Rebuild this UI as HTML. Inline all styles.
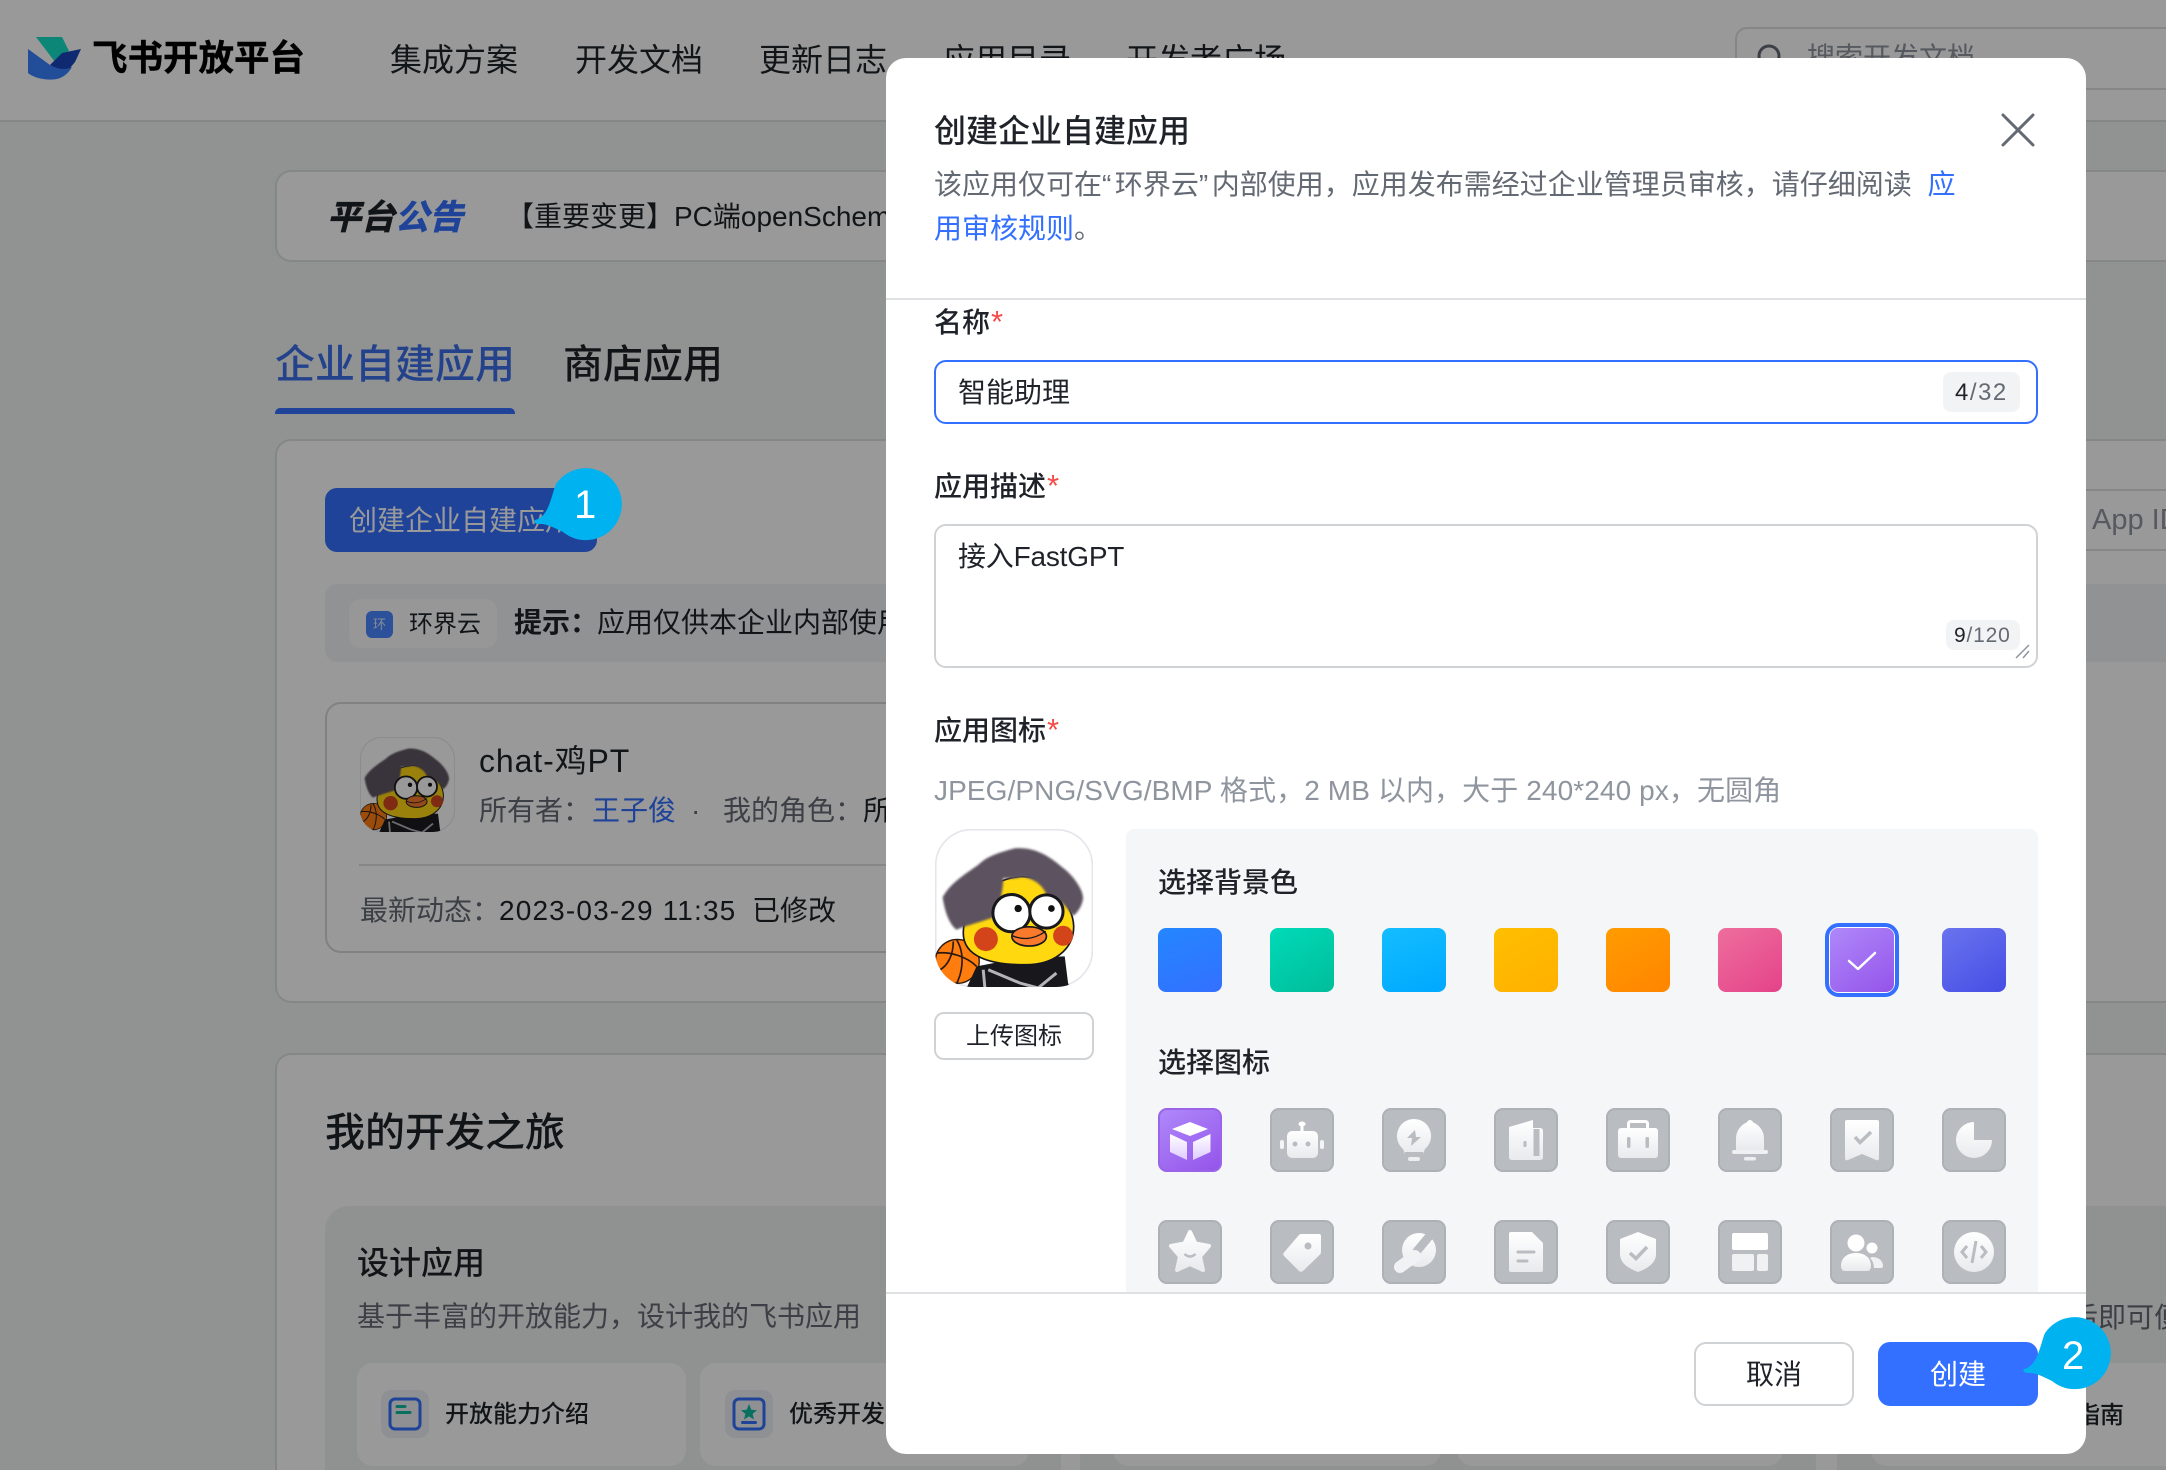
<!DOCTYPE html>
<html lang="zh-CN">
<head>
<meta charset="utf-8">
<title>飞书开放平台</title>
<style>
html,body{margin:0;padding:0;width:2166px;height:1470px;overflow:hidden;background:#f2f5f4}
body{position:relative;font-family:"Liberation Sans","Noto Sans CJK SC",sans-serif;color:#1f2329}
#clip{position:absolute;left:0;top:0;width:2166px;height:1470px;overflow:hidden}
.t{position:absolute;white-space:nowrap;line-height:1}
.b{position:absolute;box-sizing:border-box}
.m{font-weight:500}
.r{color:#f54a45;font-size:31px;margin-left:1px;line-height:1}
.sw{position:absolute;top:928px;width:64px;height:64px;border-radius:8px}
.ic{position:absolute;width:64px;height:64px;border-radius:9px;background:#b9bcc1;box-sizing:border-box;border:2px solid #adb1b5}
.ic svg{position:absolute;left:-2px;top:-2px;width:64px;height:64px}
</style>
</head>
<body>
<svg width="0" height="0" style="position:absolute">
<defs>
<linearGradient id="g" x1="0" y1="0" x2="0" y2="1"><stop offset="0" stop-color="#ffffff"/><stop offset="1" stop-color="#e8eaed"/></linearGradient>
<linearGradient id="gp" x1="0" y1="0" x2="0" y2="1"><stop offset="0" stop-color="#ffffff"/><stop offset="1" stop-color="#dfcbff"/></linearGradient>
<clipPath id="dc"><rect x="45" y="57" width="475" height="475" rx="110"/></clipPath>
<filter id="hb" x="-10%" y="-10%" width="120%" height="120%"><feGaussianBlur stdDeviation="3.500"/></filter>
<symbol id="duck" viewBox="45 57 475 475">
<rect x="47" y="59" width="471" height="471" rx="108" fill="#fff" stroke="#e5e6eb" stroke-width="5"/>
<g clip-path="url(#dc)">
<circle cx="112" cy="455" r="66" fill="#ff7d0f" stroke="#2a1a10" stroke-width="4"/>
<path d="M50 430C90 425 140 440 170 470M110 390C135 430 130 490 105 530M60 480C80 470 100 440 100 395" fill="none" stroke="#2a1a10" stroke-width="5"/>
<path d="M140 535L170 470L300 445L435 440L445 520L450 535Z" fill="#17171c"/>
<path d="M205 480L300 520L355 535M410 490L355 535M190 480L195 535" fill="none" stroke="#b4b4ba" stroke-width="9"/>
<path d="M130 370C130 290 200 210 300 200C390 195 460 280 462 350C462 420 400 468 310 465C210 465 130 440 130 370Z" fill="#ffd80f" stroke="#17171c" stroke-width="5"/>
<path filter="url(#hb)" d="M68 262C90 220 140 190 175 165C205 135 250 125 285 115C340 110 385 135 425 170C460 195 492 240 490 268C485 295 470 312 460 318C440 290 420 265 380 255C370 225 340 205 305 200C290 208 265 205 250 205C250 250 235 300 215 325C170 340 130 350 110 360C90 345 75 310 68 262Z" fill="#5d5361"/>
<circle cx="275" cy="310" r="56" fill="#fff" stroke="#17171c" stroke-width="9"/>
<circle cx="380" cy="305" r="50" fill="#fff" stroke="#17171c" stroke-width="9"/>
<circle cx="295" cy="296" r="11" fill="#111"/>
<circle cx="395" cy="296" r="10" fill="#111"/>
<circle cx="198" cy="388" r="36" fill="#d4441a"/>
<circle cx="430" cy="378" r="30" fill="#d4441a"/>
<ellipse cx="328" cy="380" rx="52" ry="29" fill="#f97a2c" stroke="#17171c" stroke-width="5"/>
<path d="M278 378C310 392 345 388 378 364" fill="none" stroke="#17171c" stroke-width="4"/>
</g>
</symbol>
</defs>
</svg>

<div id="clip">
<!-- ===== page behind the modal ===== -->
<div class="b" style="left:0;top:0;width:2166px;height:122px;background:#fff;border-bottom:2px solid #dee0e3"></div>
<svg class="b" style="left:0;top:0" width="120" height="100" viewBox="0 0 120 100">
<path d="M36 37H62L69 51L55 62Z" fill="#15e0c5"/>
<path d="M28 49L50 65C58 69 64 69 72 67C68 74 62 79 53 79.500C44 80 34 78 28 73Z" fill="#3a80ff"/>
<path d="M50 65L62 53L81 49L75 62L70 68C64 70 57 69 50 65Z" fill="#1a46bb"/>
</svg>
<div class="t" style="left:92px;top:41px;font-size:35.500px;font-weight:700;color:#000;-webkit-text-stroke:.4px #000">飞书开放平台</div>
<div class="t" style="left:390px;top:44px;font-size:32px">集成方案</div>
<div class="t" style="left:575px;top:44px;font-size:32px">开发文档</div>
<div class="t" style="left:759px;top:44px;font-size:32px">更新日志</div>
<div class="t" style="left:943px;top:44px;font-size:32px">应用目录</div>
<div class="t" style="left:1126px;top:44px;font-size:32px">开发者广场</div>
<div class="b" style="left:1735px;top:27px;width:431px;height:63px;border:2px solid #dee0e3;border-right:0;border-radius:12px 0 0 12px;background:#fff"></div>
<svg class="b" style="left:1755px;top:42px" width="34" height="34" viewBox="0 0 34 34"><circle cx="14" cy="14" r="10" fill="none" stroke="#646a73" stroke-width="3"/><path d="M22 22L29 29" stroke="#646a73" stroke-width="3"/></svg>
<div class="t" style="left:1807px;top:44px;font-size:28px;color:#8f959e">搜索开发文档</div>

<div class="b" style="left:275px;top:170px;width:1891px;height:92px;background:#fff;border:2px solid #dee0e3;border-right:0;border-radius:16px 0 0 16px"></div>
<div class="t" style="left:327px;top:201px;font-size:34px;font-weight:700;font-style:italic;color:#1f2329;-webkit-text-stroke:.7px #1f2329">平台<span style="color:#3370ff;-webkit-text-stroke:.7px #3370ff">公告</span></div>
<div class="t" style="left:506px;top:203px;font-size:28px">【重要变更】PC端openSchema</div>

<div class="t m" style="left:275px;top:345px;font-size:40px;color:#3d6fe8">企业自建应用</div>
<div class="t m" style="left:563px;top:345px;font-size:40px">商店应用</div>
<div class="b" style="left:275px;top:408px;width:240px;height:6px;background:#3370ff;border-radius:5px 5px 0 0"></div>

<!-- main card -->
<div class="b" style="left:275px;top:439px;width:1891px;height:564px;background:#fff;border:2px solid #dee0e3;border-right:0;border-radius:16px 0 0 16px"></div>
<div class="b" style="left:325px;top:488px;width:272px;height:64px;background:#3370ff;border-radius:12px"></div>
<div class="t" style="left:349px;top:507px;font-size:28px;color:#fff">创建企业自建应用</div>
<div class="b" style="left:2040px;top:489px;width:126px;height:62px;border:2px solid #dee0e3;border-right:0;border-radius:12px 0 0 12px;background:#fff"></div>
<div class="t" style="left:2092px;top:506px;font-size:29px;color:#8f959e">App ID</div>
<div class="b" style="left:325px;top:584px;width:1841px;height:78px;background:#f2f4f5;border-radius:12px 0 0 12px"></div>
<div class="b" style="left:349px;top:599px;width:148px;height:49px;background:#fff;opacity:.75;border-radius:12px"></div>
<div class="b" style="left:366px;top:611px;width:27px;height:27px;background:#4a86ff;border-radius:6px"></div>
<div class="t" style="left:373px;top:618px;font-size:13px;color:#dfe8ff">环</div>
<div class="t" style="left:409px;top:613px;font-size:24px">环界云</div>
<div class="t" style="left:514px;top:609px;font-size:28px;font-weight:700">提示：</div>
<div class="t" style="left:597px;top:609px;font-size:28px">应用仅供本企业内部使用</div>

<div class="b" style="left:325px;top:702px;width:1300px;height:251px;border:2px solid #d5d7da;border-radius:16px"></div>
<svg class="b" style="left:360px;top:737px;opacity:.98" width="95" height="95"><use href="#duck" width="95" height="95"/></svg>
<div class="t" style="left:479px;top:745px;font-size:32px;letter-spacing:.9px">chat-鸡PT</div>
<div class="t" style="left:479px;top:797px;font-size:28px;color:#646a73">所有者：</div>
<div class="t" style="left:592px;top:797px;font-size:28px;color:#3370ff">王子俊</div>
<div class="t" style="left:691px;top:797px;font-size:28px;color:#646a73">·</div>
<div class="t" style="left:723px;top:797px;font-size:28px;color:#646a73">我的角色：</div>
<div class="t" style="left:863px;top:797px;font-size:28px">所有者</div>
<div class="b" style="left:359px;top:864px;width:1200px;height:2px;background:#dee0e3"></div>
<div class="t" style="left:360px;top:897px;font-size:28px;color:#646a73">最新动态：</div>
<div class="t" style="left:499px;top:897px;font-size:28px;letter-spacing:1.150px">2023-03-29 11:35</div>
<div class="t" style="left:752px;top:897px;font-size:28px">已修改</div>

<!-- second card -->
<div class="b" style="left:275px;top:1053px;width:1891px;height:417px;background:#fff;border:2px solid #dee0e3;border-right:0;border-bottom:0;border-radius:16px 0 0 0"></div>
<div class="t m" style="left:325px;top:1113px;font-size:40px">我的开发之旅</div>
<div class="b" style="left:325px;top:1206px;width:736px;height:264px;background:#f0f3f3;border-radius:24px 24px 0 0"></div>
<div class="b" style="left:1080px;top:1206px;width:736px;height:264px;background:#f0f3f3;border-radius:24px 24px 0 0"></div>
<div class="b" style="left:1837px;top:1206px;width:329px;height:264px;background:#f0f3f3;border-radius:24px 0 0 0"></div>
<div class="t m" style="left:357px;top:1247px;font-size:32px">设计应用</div>
<div class="t" style="left:357px;top:1303px;font-size:28px;color:#646a73">基于丰富的开放能力，设计我的飞书应用</div>
<div class="b" style="left:357px;top:1363px;width:329px;height:103px;background:#fff;border-radius:16px"></div>
<div class="b" style="left:700px;top:1363px;width:329px;height:103px;background:#fff;border-radius:16px"></div>
<div class="b" style="left:1113px;top:1363px;width:328px;height:103px;background:#fff;border-radius:16px"></div>
<div class="b" style="left:1457px;top:1363px;width:326px;height:103px;background:#fff;border-radius:16px"></div>
<div class="b" style="left:1871px;top:1363px;width:295px;height:103px;background:#fff;border-radius:16px 0 0 16px"></div>
<svg class="b" style="left:381px;top:1390px" width="48" height="48" viewBox="0 0 48 48"><rect width="48" height="48" rx="10" fill="#edf1f5"/><rect x="9" y="9" width="30" height="30" rx="5" fill="none" stroke="#3370ff" stroke-width="3"/><path d="M16 16.500H24M16 22.500H29" stroke="#10b9a0" stroke-width="3" stroke-linecap="round"/></svg>
<div class="t m" style="left:445px;top:1403px;font-size:24px">开放能力介绍</div>
<svg class="b" style="left:725px;top:1390px" width="48" height="48" viewBox="0 0 48 48"><rect width="48" height="48" rx="10" fill="#edf1f5"/><rect x="9" y="9" width="30" height="30" rx="5" fill="none" stroke="#3370ff" stroke-width="3"/><path d="M24 14L26.300 19.800L32 20.200L27.600 23.900L29 29.500L24 26.400L19 29.500L20.400 23.900L16 20.200L21.700 19.800Z" fill="#10b9a0"/><path d="M17.500 32.500H30.500" stroke="#3370ff" stroke-width="3" stroke-linecap="round"/></svg>
<div class="t m" style="left:789px;top:1403px;font-size:24px">优秀开发者案例</div>
<div class="t" style="left:2070px;top:1304px;font-size:28px;color:#646a73">后即可便</div>
<div class="t m" style="left:2076px;top:1404px;font-size:24px">指南</div>
</div>

<!-- overlay -->
<div class="b" style="left:0;top:0;width:2166px;height:1470px;background:rgba(0,0,0,.4)"></div>

<!-- ===== modal ===== -->
<div class="b" style="left:886px;top:58px;width:1200px;height:1396px;background:#fff;border-radius:20px"></div>
<div class="t m" style="left:934px;top:115px;font-size:32px">创建企业自建应用</div>
<svg class="b" style="left:2000px;top:112px" width="36" height="36" viewBox="0 0 36 36"><path d="M3 3L33 33M33 3L3 33" stroke="#646a73" stroke-width="3" stroke-linecap="round"/></svg>
<div class="t" style="left:934px;top:163px;font-size:28px;line-height:44px;color:#646a73;white-space:nowrap">该应用仅可在<span style="letter-spacing:3.500px">“</span>环界云<span style="letter-spacing:3.500px">”</span>内部使用，应用发布需经过企业管理员审核，请仔细阅读 <span style="color:#3370ff;margin-left:8px">应<br>用审核规则</span>。</div>
<div class="b" style="left:886px;top:298px;width:1200px;height:2px;background:#dee0e3"></div>

<div class="t m" style="left:934px;top:306px;font-size:28px">名称<span class="r">*</span></div>
<div class="b" style="left:934px;top:360px;width:1104px;height:64px;border:2px solid #3370ff;border-radius:12px"></div>
<div class="t" style="left:958px;top:379px;font-size:28px">智能助理</div>
<div class="b" style="left:1943px;top:372px;width:77px;height:40px;background:#f2f3f5;border-radius:8px"></div>
<div class="t" style="left:1955px;top:381px;font-size:24px;letter-spacing:1.500px;color:#646a73"><span style="color:#1f2329">4</span>/32</div>

<div class="t m" style="left:934px;top:470px;font-size:28px">应用描述<span class="r">*</span></div>
<div class="b" style="left:934px;top:524px;width:1104px;height:144px;border:2px solid #d0d3d6;border-radius:12px"></div>
<div class="t" style="left:958px;top:543px;font-size:28px;letter-spacing:-.2px">接入FastGPT</div>
<div class="b" style="left:1946px;top:620px;width:74px;height:30px;background:#f2f3f5;border-radius:8px"></div>
<div class="t" style="left:1954px;top:625px;font-size:21px;letter-spacing:.8px;color:#646a73"><span style="color:#1f2329">9</span>/120</div>
<svg class="b" style="left:2014px;top:642px" width="18" height="18" viewBox="0 0 18 18"><path d="M2 16L15 3M9 16L15 9" stroke="#8f959e" stroke-width="1.500"/></svg>

<div class="t m" style="left:934px;top:714px;font-size:28px">应用图标<span class="r">*</span></div>
<div class="t" style="left:934px;top:777px;font-size:28px;letter-spacing:.1px;color:#8f959e">JPEG/PNG/SVG/BMP 格式，2 MB 以内，大于 240*240 px，无圆角</div>

<svg class="b" style="left:935px;top:829px" width="158" height="158"><use href="#duck" width="158" height="158"/></svg>
<div class="b" style="left:934px;top:1012px;width:160px;height:48px;border:2px solid #d0d3d6;border-radius:10px"></div>
<div class="t" style="left:966px;top:1025px;font-size:24px">上传图标</div>

<div class="b" style="left:1126px;top:829px;width:912px;height:464px;background:#f5f6f8;border-radius:8px 8px 0 0"></div>
<div class="t m" style="left:1158px;top:869px;font-size:28px">选择背景色</div>
<div class="sw" style="left:1158px;background:linear-gradient(160deg,#2486ff,#3370ff)"></div>
<div class="sw" style="left:1270px;background:linear-gradient(150deg,#00dab8,#00bd9a)"></div>
<div class="sw" style="left:1382px;background:linear-gradient(160deg,#14bdff,#00a8ff)"></div>
<div class="sw" style="left:1494px;background:linear-gradient(150deg,#ffbf00,#ffb000)"></div>
<div class="sw" style="left:1606px;background:linear-gradient(150deg,#ff9c00,#ff8500)"></div>
<div class="sw" style="left:1718px;background:linear-gradient(145deg,#ee6e9d,#e44389)"></div>
<div class="b" style="left:1825px;top:923px;width:74px;height:74px;border:4px solid #3370ff;border-radius:14px;background:#fff"></div>
<div class="b" style="left:1830px;top:928px;width:64px;height:64px;border-radius:8px;background:linear-gradient(145deg,#af88fa,#9454ea)"></div>
<svg class="b" style="left:1845px;top:948px" width="34" height="26" viewBox="0 0 34 26"><path d="M4 13L13 21L30 5" fill="none" stroke="#fff" stroke-width="2.500" stroke-linecap="round" stroke-linejoin="round"/></svg>
<div class="sw" style="left:1942px;background:linear-gradient(145deg,#6a74ee,#454de5)"></div>

<div class="t m" style="left:1158px;top:1049px;font-size:28px">选择图标</div>

<!-- row 1 -->
<div class="ic" style="left:1158px;top:1108px;background:linear-gradient(145deg,#af88fa,#9454ea);border-color:#9a63e8"><svg viewBox="0 0 64 64"><path d="M32 14L50 21L32 28L14 21Z" fill="#fff"/><path d="M12 26L29 34V52L12 44ZM35 34L52.500 26V44L35 52Z" fill="url(#gp)"/></svg></div>
<div class="ic" style="left:1270px;top:1108px"><svg viewBox="0 0 64 64"><ellipse cx="32" cy="16" rx="3.500" ry="2.500" fill="#fff"/><rect x="30.500" y="16" width="3" height="8" fill="#fff"/><rect x="17" y="23" width="31" height="27" rx="5" fill="url(#g)"/><circle cx="25" cy="36" r="2.500" fill="#b9bcc1"/><circle cx="38" cy="36" r="2.500" fill="#b9bcc1"/><rect x="10" y="32" width="4" height="9" rx="2" fill="#f3f4f5"/><rect x="50" y="32" width="4" height="9" rx="2" fill="#f3f4f5"/></svg></div>
<div class="ic" style="left:1382px;top:1108px"><svg viewBox="0 0 64 64"><path d="M32 11A17 17 0 0 1 43 41L41 46H23L21 41A17 17 0 0 1 32 11Z" fill="url(#g)"/><path d="M33 22L25 30H30L29 38L39 29H34Z" fill="#b9bcc1"/><rect x="23" y="44" width="18" height="3" fill="#b9bcc1"/><rect x="26" y="49" width="12" height="4" rx="2" fill="#eceef0"/></svg></div>
<div class="ic" style="left:1494px;top:1108px"><svg viewBox="0 0 64 64"><path d="M15 19L39 12V20H46Q49 20 49 23V49Q49 52 46 52H18Q15 52 15 49Z" fill="url(#g)"/><rect x="39.500" y="21" width="6" height="27" fill="#b9bcc1"/><rect x="29.500" y="33" width="3" height="6" rx="1" fill="#b9bcc1"/></svg></div>
<div class="ic" style="left:1606px;top:1108px"><svg viewBox="0 0 64 64"><rect x="22.500" y="13.500" width="19" height="9" rx="2" fill="none" stroke="#fff" stroke-width="3"/><rect x="12" y="20" width="40" height="30" rx="3" fill="url(#g)"/><rect x="21" y="29" width="3.500" height="11" rx="1.500" fill="#b9bcc1"/><rect x="39.500" y="29" width="3.500" height="11" rx="1.500" fill="#b9bcc1"/></svg></div>
<div class="ic" style="left:1718px;top:1108px"><svg viewBox="0 0 64 64"><path d="M32 13C26 15 18 20 18 31V42H46V31C46 20 38 15 32 13Z" fill="url(#g)"/><rect x="14" y="42" width="36" height="4" rx="2" fill="#eef0f2"/><circle cx="32" cy="15" r="3" fill="#fff"/><rect x="26" y="49" width="12" height="3.500" rx="1.700" fill="#eceef0"/></svg></div>
<div class="ic" style="left:1830px;top:1108px"><svg viewBox="0 0 64 64"><path d="M17 12H47Q49 12 49 14V50Q49 53 46 52L32 46L18 52Q15 53 15 50V14Q15 12 17 12Z" fill="url(#g)"/><path d="M25 29L30 34.500L41 24" fill="none" stroke="#b9bcc1" stroke-width="3.500"/></svg></div>
<div class="ic" style="left:1942px;top:1108px"><svg viewBox="0 0 64 64"><path d="M32 14V32H50A18 18 0 1 1 32 14Z" fill="url(#g)"/></svg></div>

<!-- row 2 -->
<div class="ic" style="left:1158px;top:1220px"><svg viewBox="0 0 64 64"><path d="M32 12L37.500 23.500L51 26L42 36.500L45 50L32 44L19 50L22 36.500L13 26L26.500 23.500Z" fill="url(#g)" stroke="url(#g)" stroke-width="4" stroke-linejoin="round"/><path d="M26.500 34Q32 39 37.500 34" fill="none" stroke="#b9bcc1" stroke-width="2.500"/></svg></div>
<div class="ic" style="left:1270px;top:1220px"><svg viewBox="0 0 64 64"><path d="M31 14H49Q51 14 51 16V32Q51 33.500 50 34.500L33 51Q30.500 52.500 29 51L14 36Q12.500 34 14 32.500L29 15Q30 14 31 14Z" fill="url(#g)"/><circle cx="38" cy="26" r="3.500" fill="#b9bcc1"/></svg></div>
<div class="ic" style="left:1382px;top:1220px"><svg viewBox="0 0 64 64"><circle cx="37" cy="30" r="17" fill="url(#g)"/><path d="M35 31L50 13" stroke="#b9bcc1" stroke-width="8.500" stroke-linecap="round"/><path d="M33 36L18 47" stroke="#f1f2f4" stroke-width="12" stroke-linecap="round"/></svg></div>
<div class="ic" style="left:1494px;top:1220px"><svg viewBox="0 0 64 64"><path d="M17 12H38L49 23V50Q49 52 47 52H17Q15 52 15 50V14Q15 12 17 12Z" fill="url(#g)"/><path d="M24 32H40M24 41H33" stroke="#b9bcc1" stroke-width="3" stroke-linecap="round"/></svg></div>
<div class="ic" style="left:1606px;top:1220px"><svg viewBox="0 0 64 64"><path d="M32 12L50 19V34C50 44 40 49 32 52C24 49 14 44 14 34V19Z" fill="url(#g)"/><path d="M24 33L30 38.500L41 27" fill="none" stroke="#b9bcc1" stroke-width="3.500"/></svg></div>
<div class="ic" style="left:1718px;top:1220px"><svg viewBox="0 0 64 64"><rect x="14" y="13" width="36" height="17" rx="2" fill="#fff"/><rect x="14" y="34" width="22" height="17" rx="2" fill="#f0f1f3"/><rect x="39" y="34" width="11" height="17" rx="2" fill="#f0f1f3"/></svg></div>
<div class="ic" style="left:1830px;top:1220px"><svg viewBox="0 0 64 64"><circle cx="26" cy="23" r="8.500" fill="#fff"/><path d="M11 46C11 38 17 33 26 33C35 33 41 38 41 46Q41 51 37 51H15Q11 51 11 46Z" fill="url(#g)"/><circle cx="42" cy="28" r="5.500" fill="#fff"/><path d="M42 37C49 37 53 41 53 46Q53 48 51 48H44Q44 42 40 38Z" fill="#f0f1f3"/></svg></div>
<div class="ic" style="left:1942px;top:1220px"><svg viewBox="0 0 64 64"><circle cx="32" cy="32" r="20" fill="url(#g)"/><path d="M25 26L20 32L25 38M39 26L44 32L39 38M34 21L30 43" fill="none" stroke="#b9bcc1" stroke-width="3"/></svg></div>

<!-- footer -->
<div class="b" style="left:886px;top:1292px;width:1200px;height:2px;background:#dee0e3"></div>
<div class="b" style="left:1694px;top:1342px;width:160px;height:64px;border:2px solid #d0d3d6;border-radius:12px;background:#fff"></div>
<div class="t" style="left:1746px;top:1361px;font-size:28px">取消</div>
<div class="b" style="left:1878px;top:1342px;width:160px;height:64px;background:#3370ff;border-radius:12px"></div>
<div class="t" style="left:1930px;top:1361px;font-size:28px;color:#fff">创建</div>

<!-- callouts -->
<svg class="b" style="left:0;top:0" width="2166" height="1470" viewBox="0 0 2166 1470">
<path d="M2024 1369C2038 1366 2040 1345 2045 1333A36 36 0 1 1 2052 1381C2042 1376 2034 1372 2026 1373Q2022 1371 2024 1369Z" fill="#00b2f0"/>
<path transform="translate(-1489 -849)" d="M2024 1369C2038 1366 2040 1345 2045 1333A36 36 0 1 1 2052 1381C2042 1376 2034 1372 2026 1373Q2022 1371 2024 1369Z" fill="#00b2f0"/>
</svg>
<div class="t" style="left:574px;top:485px;font-size:40px;color:#fff">1</div>
<div class="t" style="left:2062px;top:1336px;font-size:40px;color:#fff">2</div>
</body>
</html>
